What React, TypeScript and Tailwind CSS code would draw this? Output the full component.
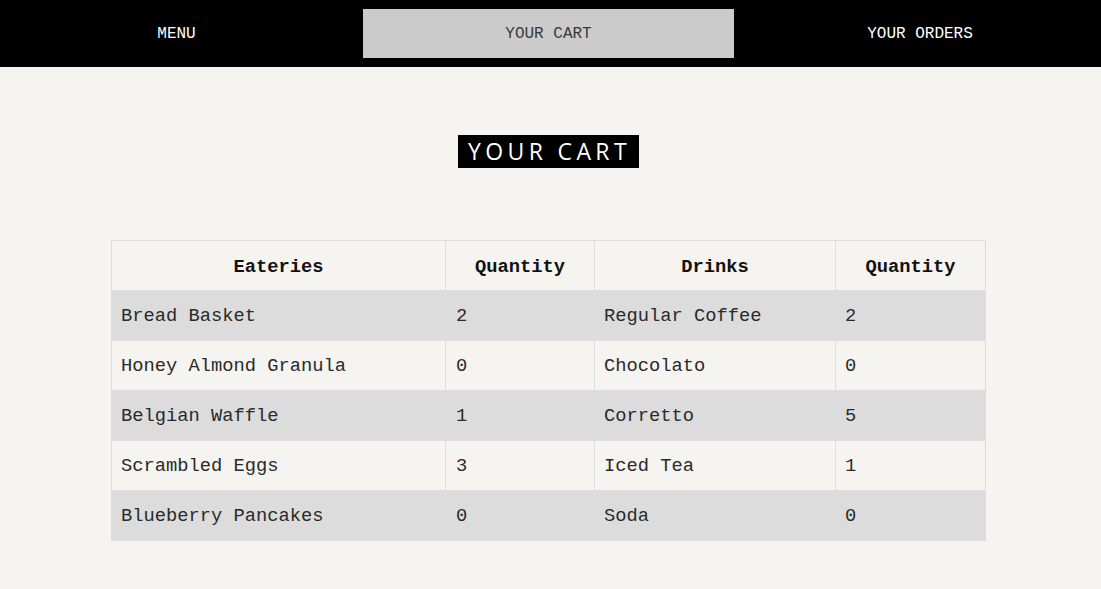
const rows = [
  { food: 'Bread Basket', foodQty: 2, drink: 'Regular Coffee', drinkQty: 2 },
  { food: 'Honey Almond Granula', foodQty: 0, drink: 'Chocolato', drinkQty: 0 },
  { food: 'Belgian Waffle', foodQty: 1, drink: 'Corretto', drinkQty: 5 },
  { food: 'Scrambled Eggs', foodQty: 3, drink: 'Iced Tea', drinkQty: 1 },
  { food: 'Blueberry Pancakes', foodQty: 0, drink: 'Soda', drinkQty: 0 },
];

const mono = "font-['Liberation_Mono','DejaVu_Sans_Mono',monospace]";

export default function App() {
  return (
    <div className={`min-h-[589px] bg-[#f5f4f0] ${mono}`}>
      <nav className="flex h-[67px] bg-black">
        <a className="flex w-[363px] items-center justify-center pr-[10px] text-[16px] text-white">MENU</a>
        <a className="my-[9px] flex w-[371px] items-center justify-center bg-[#cbcbcb] text-[16px] text-[#3a3a3a]">
          YOUR CART
        </a>
        <a className="flex flex-1 items-center justify-center pl-[5px] text-[16px] text-white">YOUR ORDERS</a>
      </nav>

      <div className="flex justify-center pr-[4px] pt-[68px]">
        <h1 className="bg-black pl-[10px] pr-[8px] font-['Open_Sans','Noto_Sans',sans-serif] text-[23px] leading-[33px] tracking-[0.19em] text-white">
          YOUR CART
        </h1>
      </div>

      <div className="flex justify-center pr-[4px] pt-[72px]">
        <table className="w-[875px] border-collapse text-[18.75px] text-[#2a2a2a]">
          <thead>
            <tr className="h-[50px]">
              <th className="w-[334px] border border-[#dddddd] pt-[3px] font-bold text-[#111]">Eateries</th>
              <th className="w-[149px] border border-[#dddddd] pt-[3px] font-bold text-[#111]">Quantity</th>
              <th className="w-[241px] border border-[#dddddd] pt-[3px] font-bold text-[#111]">Drinks</th>
              <th className="border border-[#dddddd] pt-[3px] font-bold text-[#111]">Quantity</th>
            </tr>
          </thead>
          <tbody>
            {rows.map((r, i) => (
              <tr key={r.food} className={`h-[50px] ${i % 2 === 0 ? 'bg-[#dcdcdc]' : ''}`}>
                <td className="border border-[#dddddd] pl-[9px] pt-[2px]">{r.food}</td>
                <td className="border border-[#dddddd] pl-[10px] pt-[2px]">{r.foodQty}</td>
                <td className="border border-[#dddddd] pl-[9px] pt-[2px]">{r.drink}</td>
                <td className="border border-[#dddddd] pl-[9px] pt-[2px]">{r.drinkQty}</td>
              </tr>
            ))}
          </tbody>
        </table>
      </div>
    </div>
  );
}
